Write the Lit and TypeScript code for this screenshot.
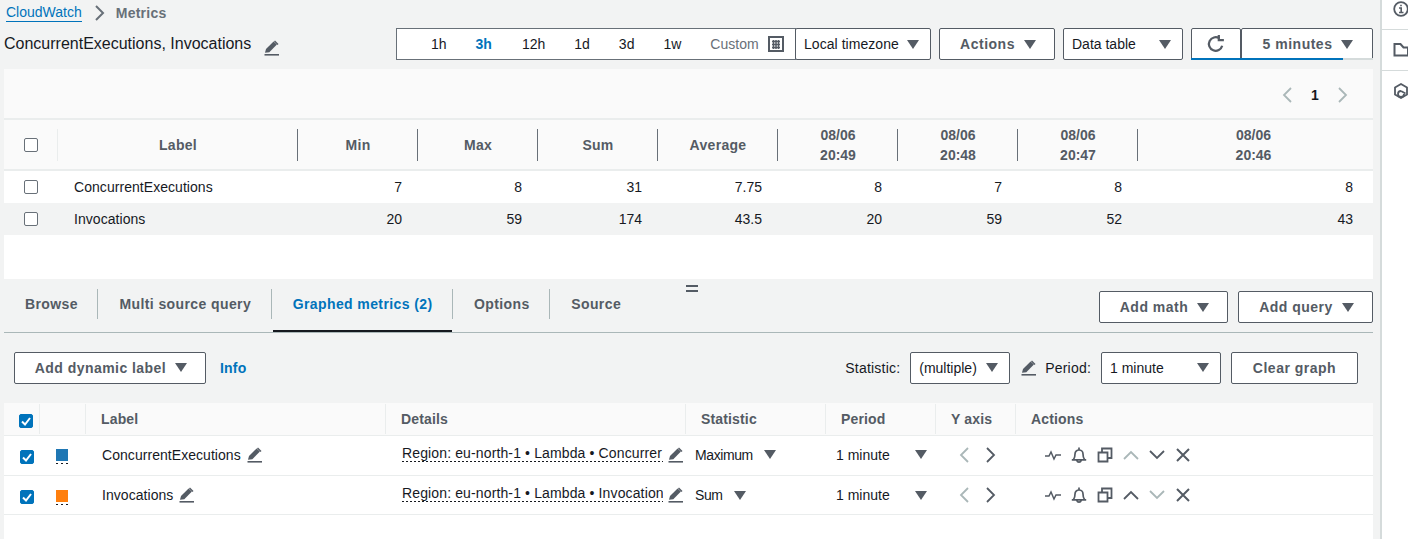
import { LitElement, html, css, svg } from 'lit';
import { customElement } from 'lit/decorators.js';

const icon = (body: unknown, size = 16, cls = '') => html`<svg class="ico ${cls}" width=${size} height=${size} viewBox="0 0 16 16" fill="none" stroke="currentColor" stroke-width="2">${body}</svg>`;

const caret = () => html`<svg class="caret" width="12" height="9" viewBox="0 0 12 9"><path d="M0 0h12L6 9z" fill="currentColor"></path></svg>`;
const pencil = () => icon(svg`<path d="M.5 14.800h14.500" stroke-width="1.600"></path><path d="M1 12.800l1-3.800 7.600-7.600 3.300 3.200-7.600 7.600z" fill="currentColor" stroke="none"></path><path d="M11 .5l3.500 3.400-1 1L10 1.500z" fill="currentColor" stroke="none"></path>`, 16, 'pencil');
const chevL = (cls = '') => icon(svg`<path d="M11 1L4 8l7 7" stroke-width="1.800"></path>`, 16, cls);
const chevR = (cls = '') => icon(svg`<path d="M5 1l7 7-7 7" stroke-width="1.800"></path>`, 16, cls);
const chevU = (cls = '') => icon(svg`<path d="M1 12l7-7 7 7" stroke-width="1.800"></path>`, 16, cls);
const chevD = (cls = '') => icon(svg`<path d="M1 4l7 7 7-7" stroke-width="1.800"></path>`, 16, cls);
const pulse = () => icon(svg`<path d="M0 9h4l2-4 3 7 2-4h5" stroke-width="1.500"></path>`);
const bell = () => icon(svg`<path d="M.8 12.800h14.400M2.500 12.500c1.200-1.500 1.500-3 1.500-5.500a4 4 0 0 1 8 0c0 2.500.3 4 1.500 5.500M8 .5v2.500M5.800 13.500a2.300 2.300 0 0 0 4.400 0" stroke-width="1.700"></path>`);
const copy = () => icon(svg`<path d="M1.500 5.500h9v9h-9zM5 5V1.500h9.500V11H11" stroke-width="1.800"></path>`);
const close = () => icon(svg`<path d="M2 2l12 12M14 2L2 14" stroke-width="2"></path>`);
const check = () => html`<svg class="tick" width="14" height="14" viewBox="0 0 14 14"><path d="M3 7.500l3 3 5-6.500" fill="none" stroke="#fff" stroke-width="2"></path></svg>`;

const STATS = [
  { name: 'ConcurrentExecutions', values: [7, 8, 31, 7.75, 8, 7, 8, 8] },
  { name: 'Invocations', values: [20, 59, 174, 43.5, 20, 59, 52, 43] },
];

const METRICS = [
  { name: 'ConcurrentExecutions', color: '#1f77b4', details: 'Region: eu-north-1 • Lambda • Concurrer', stat: 'Maximum', upOff: true, downOff: false },
  { name: 'Invocations', color: '#ff7f0e', details: 'Region: eu-north-1 • Lambda • Invocation', stat: 'Sum', upOff: false, downOff: true },
];

@customElement('app-root')
export class AppRoot extends LitElement {
  static styles = css`
    :host {
      display: flex;
      width: 1408px;
      height: 539px;
      overflow: hidden;
      background: #f2f3f3;
      font-family: "Liberation Sans", Arial, sans-serif;
      font-size: 14px;
      color: #16191f;
    }
    * { box-sizing: border-box; }
    .ico { flex: none; display: block; color: #545b64; }
    .off { color: #aab7b8; }
    .caret { flex: none; display: block; color: #545b64; }
    .main { width: 1380px; flex: none; padding: 0 7px 0 4px; display: flex; flex-direction: column; }
    .side { flex: 1; background: #fff; border-left: 2px solid #d5dbdb; }
    .side-item { height: 41px; padding-left: 11px; display: flex; align-items: center; border-bottom: 1px solid #d5dbdb; overflow: hidden; }
    .side-item.info { height: 30px; align-items: flex-start; padding-top: 1px; }
    .side-item.hex { border-bottom: none; padding-bottom: 1px; }

    .crumbs { height: 28px; flex: none; display: flex; align-items: center; padding: 0 0 2px 2px; }
    .crumbs a { color: #0073bb; border-bottom: 1px solid #0073bb; line-height: 17px; }
    .crumbs .ico { margin: 0 9px 0 9px; color: #687078; }
    .crumbs b { color: #687078; letter-spacing: .25px; }

    .top { height: 32px; flex: none; display: flex; align-items: stretch; }
    .title { width: 392px; flex: none; display: flex; align-items: center; font-size: 16px; }
    .title .ico { margin: 7px 0 0 13px; }
    .range { width: 400px; flex: none; display: flex; align-items: center; gap: 29px; padding-left: 34px; background: #fff; border: 1px solid #687078; }
    .range .on { color: #0073bb; font-weight: 700; }
    .range .wide { margin-left: 1px; }
    .range .custom { color: #687078; margin: 0 -20px 0 0; }
    .tz { margin-left: -1px; width: 136px; padding: 0 11px 0 8px; letter-spacing: .05px; }
    .field, .btn {
      height: 32px;
      display: flex;
      align-items: center;
      justify-content: space-between;
      background: #fff;
      border: 1px solid #545b64;
      border-radius: 2px;
      flex: none;
    }
    .btn { justify-content: center; gap: 9px; padding-left: 2px; font-weight: 700; color: #545b64; letter-spacing: .5px; }
    .actions { margin-left: 8px; width: 116px; }
    .view { margin-left: 8px; width: 120px; padding: 0 11px 0 8px; }
    .refresh { margin-left: 8px; width: 50px; position: relative; padding-left: 0; }
    .interval { width: 132px; position: relative; }
    .track { position: absolute; left: -1px; right: -1px; bottom: -1px; height: 2px; background: #d5dbdb; }
    .progress { position: absolute; left: -1px; bottom: -1px; height: 2px; background: #0073bb; }
    .refresh .progress { right: -1px; }
    .interval .progress { width: 102px; }

    .panel { margin-top: 9px; height: 210px; flex: none; background: #fff; display: flex; flex-direction: column; }
    .pager { height: 51px; flex: none; background: #fafafa; border-bottom: 2px solid #eaeded; display: flex; align-items: center; justify-content: flex-end; gap: 14px; padding: 3px 23px 0 0; }
    .pager b { width: 8px; margin: 0 1px; }
    .stats-row { display: grid; grid-template-columns: 54px 240px repeat(7, 120px) 235px; }
    .stats-head { height: 51px; background: #fafafa; border-bottom: 2px solid #eaeded; align-items: center; }
    .stats-head > div {
      height: 32px;
      padding-left: 1px;
      display: flex;
      align-items: center;
      justify-content: center;
      text-align: center;
      font-weight: 700;
      color: #545b64;
      letter-spacing: .3px;
      line-height: 20px;
      border-right: 1px solid #687078;
    }
    .stats-head > .first { justify-content: flex-start; padding-left: 20px; border-right-color: #eaeded; }
    .stats-head > .stamp { letter-spacing: 0; padding-top: 1px; }
    .stats-head > .stamp:last-child { border-right: none; padding-right: 5px; }
    .stats-body { height: 32px; align-items: center; }
    .stats-body.alt { background: #f2f3f3; }
    .stats-body .first { padding-left: 20px; }
    .stats-body .name { padding-left: 16px; letter-spacing: .05px; }
    .stats-body .num { text-align: right; padding-right: 16px; }
    .stats-body .num:last-child { padding-right: 20px; }
    .box { width: 14px; height: 14px; border: 1px solid #687078; border-radius: 2px; background: #fff; display: block; }
    .box.checked { background: #0073bb; border-color: #0073bb; position: relative; }
    .tick { position: absolute; left: -1px; top: -1px; }

    .tabs { height: 54px; flex: none; display: flex; align-items: flex-start; border-bottom: 1px solid #aab7b8; position: relative; }
    .tab { height: 53px; padding-top: 10px; display: flex; align-items: flex-start; position: relative; font-weight: 700; color: #545b64; letter-spacing: .4px; }
    .tab span { display: flex; align-items: center; height: 30px; padding: 0 19.500px 0 21px; border-right: 1px solid #aab7b8; }
    .tab.last span { border-right: none; }
    .tab.on { color: #0073bb; }
    .tab.on::after { content: ""; position: absolute; left: 1px; right: 1px; bottom: 0; height: 2px; background: #16191f; }
    .grip { position: absolute; left: 682px; top: 6px; width: 12px; height: 7px; border-top: 2px solid #545b64; border-bottom: 2px solid #545b64; }
    .tab-btns { margin-left: auto; padding-top: 12px; display: flex; gap: 10px; }
    .tab-btns .math { width: 129px; }
    .tab-btns .query { width: 135px; }

    .controls { height: 70px; flex: none; display: flex; align-items: center; padding: 0 15px 1px 10px; }
    .dyn { width: 192px; letter-spacing: .45px; }
    .info-link { margin-left: 14px; color: #0073bb; font-weight: 700; letter-spacing: .2px; }
    .spacer { flex: 1; }
    .lab { letter-spacing: .2px; }
    .stat-sel { margin-left: 10px; width: 100px; padding: 0 11px 0 8px; }
    .controls .pencil { margin-left: 11px; }
    .period-lab { margin-left: 8px; }
    .per-sel { margin-left: 10px; width: 120px; padding: 0 11px 0 8px; }
    .clear { margin-left: 10px; width: 127px; padding-left: 0; }

    .metrics { flex: 1; background: #fff; }
    .m-row { display: grid; grid-template-columns: 36px 46px 300px 300px 140px 110px 80px 1fr; align-items: center; }
    .m-head { height: 33px; background: #fafafa; border-bottom: 1px solid #eaeded; font-weight: 700; color: #545b64; letter-spacing: .15px; }
    .m-head > div { height: 30px; display: flex; align-items: center; padding-left: 15px; border-right: 1px solid #eaeded; margin-top: -1px; }
    .m-head > .c0 { padding-top: 4px; }
    .m-head > div:last-child { border-right: none; }
    .m-body { height: 40px; border-bottom: 1px solid #eaeded; padding-bottom: 2px; }
    .m-body.second { height: 39px; padding-bottom: 0; }
    .c-check { padding: 4px 0 0 16px; }
    .swatch { margin: 4px 0 0 16px; width: 12px; display: block; }
    .swatch i { display: block; width: 12px; height: 12px; }
    .swatch u { display: block; height: 1px; margin-top: 2px; background: repeating-linear-gradient(90deg, #16191f 0 2px, transparent 2px 5px); }
    .c-name { display: flex; align-items: center; gap: 6px; padding-left: 16px; letter-spacing: .05px; }
    .c-details { display: flex; align-items: center; gap: 5px; padding-left: 16px; }
    .c-details span {
      width: 261px;
      white-space: nowrap;
      overflow: hidden;
      letter-spacing: .13px;
      line-height: 18px;
      position: relative;
      top: -2px;
      background: repeating-linear-gradient(90deg, #16191f 0 2px, transparent 2px 4px) bottom / 100% 1px no-repeat;
    }
    .c-stat { display: flex; align-items: center; gap: 11px; padding-left: 9px; }
    .c-stat span { letter-spacing: -.4px; }
    .c-per { display: flex; align-items: center; justify-content: space-between; padding: 0 9px 0 10px; }
    .c-y { display: flex; align-items: center; gap: 9px; padding-left: 21px; }
    .c-act { display: flex; align-items: center; gap: 10px; padding-left: 29px; }
  `;

  render() {
    const heads = ['Min', 'Max', 'Sum', 'Average'];
    const stamps = ['20:49', '20:48', '20:47', '20:46'];
    return html`
      <div class="main">
        <div class="crumbs">
          <a>CloudWatch</a>
          ${icon(svg`<path d="M5 1l7 7-7 7" stroke-width="2"></path>`)}
          <b>Metrics</b>
        </div>
        <div class="top">
          <div class="title">ConcurrentExecutions, Invocations ${pencil()}</div>
          <div class="range">
            <span>1h</span><span class="on">3h</span><span class="wide">12h</span><span>1d</span><span>3d</span><span>1w</span>
            <span class="custom">Custom</span>
            ${icon(svg`<path d="M1 1h14v14H1z" stroke-width="2"></path><path d="M4 5.500h8M4 8.500h8M4 11.500h8M5.500 4v9M8 4v9M10.500 4v9" stroke-width="1.500"></path>`)}
          </div>
          <div class="field tz">Local timezone ${caret()}</div>
          <div class="btn actions">Actions ${caret()}</div>
          <div class="field view">Data table ${caret()}</div>
          <div class="btn refresh">
            ${icon(svg`<path d="M13.500 9.500A6 6 0 1 1 11 3" stroke-width="2"></path><path d="M10.500 0v4.500H15" stroke-width="2"></path>`, 18)}
            <i class="progress"></i>
          </div>
          <div class="btn interval">5 minutes ${caret()}<i class="track"></i><i class="progress"></i></div>
        </div>

        <div class="panel">
          <div class="pager">${chevL('off')}<b>1</b>${chevR('off')}</div>
          <div class="stats-row stats-head">
            <div class="first"><i class="box"></i></div>
            <div>Label</div>
            ${heads.map((h) => html`<div>${h}</div>`)}
            ${stamps.map((s) => html`<div class="stamp">08/06<br />${s}</div>`)}
          </div>
          ${STATS.map((r, i) => html`
            <div class="stats-row stats-body ${i ? 'alt' : ''}">
              <div class="first"><i class="box"></i></div>
              <div class="name">${r.name}</div>
              ${r.values.map((v) => html`<div class="num">${v}</div>`)}
            </div>
          `)}
        </div>

        <div class="tabs">
          <div class="tab"><span>Browse</span></div>
          <div class="tab"><span>Multi source query</span></div>
          <div class="tab on"><span>Graphed metrics (2)</span></div>
          <div class="tab"><span>Options</span></div>
          <div class="tab last"><span>Source</span></div>
          <i class="grip"></i>
          <div class="tab-btns">
            <div class="btn math">Add math ${caret()}</div>
            <div class="btn query">Add query ${caret()}</div>
          </div>
        </div>

        <div class="controls">
          <div class="btn dyn">Add dynamic label ${caret()}</div>
          <span class="info-link">Info</span>
          <span class="spacer"></span>
          <span class="lab">Statistic:</span>
          <div class="field stat-sel">(multiple) ${caret()}</div>
          ${pencil()}
          <span class="lab period-lab">Period:</span>
          <div class="field per-sel">1 minute ${caret()}</div>
          <div class="btn clear">Clear graph</div>
        </div>

        <div class="metrics">
          <div class="m-row m-head">
            <div class="c0"><i class="box checked">${check()}</i></div>
            <div></div>
            <div>Label</div><div>Details</div><div>Statistic</div><div>Period</div><div>Y axis</div><div>Actions</div>
          </div>
          ${METRICS.map((m, i) => html`
            <div class="m-row m-body ${i ? 'second' : ''}">
              <div class="c-check"><i class="box checked">${check()}</i></div>
              <div><span class="swatch"><i style="background:${m.color}"></i><u></u></span></div>
              <div class="c-name">${m.name} ${pencil()}</div>
              <div class="c-details"><span>${m.details}</span>${pencil()}</div>
              <div class="c-stat"><span>${m.stat}</span> ${caret()}</div>
              <div class="c-per">1 minute ${caret()}</div>
              <div class="c-y">${chevL('off')}${chevR()}</div>
              <div class="c-act">
                ${pulse()}${bell()}${copy()}
                ${chevU(m.upOff ? 'off' : '')}${chevD(m.downOff ? 'off' : '')}${close()}
              </div>
            </div>
          `)}
        </div>
      </div>
      <div class="side">
        <div class="side-item info">${icon(svg`<circle cx="8" cy="8" r="6.800" stroke-width="1.800"></circle><path d="M6 7h2.200v4M6 11.500h4.500M7.200 4.500h1.600" stroke-width="1.600"></path>`)}</div>
        <div class="side-item">${icon(svg`<path d="M1.500 2h6l3 3.500h4.500v8h-13.500z" stroke-width="2"></path>`)}</div>
        <div class="side-item hex">${icon(svg`<path d="M8 1l6 3.500v7L8 15l-6-3.500v-7z" stroke-width="1.800"></path><path d="M8 8l4.500 2.500M8 8a3 3 0 1 0 3 3" stroke-width="1.800"></path>`)}</div>
      </div>
    `;
  }
}
